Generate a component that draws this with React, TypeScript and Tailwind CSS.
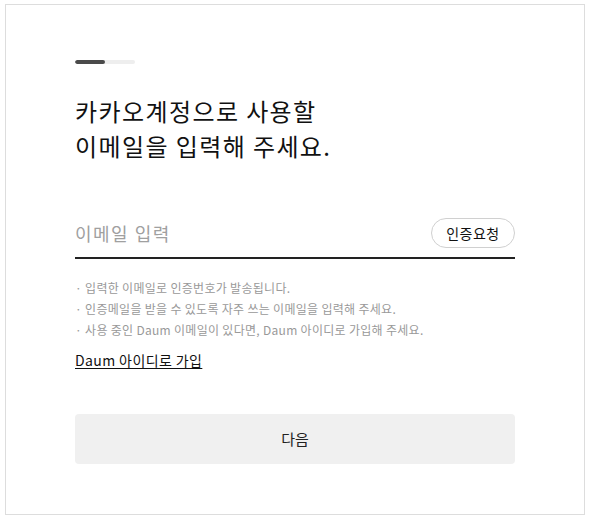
import React from 'react';

const notes = [
  '입력한 이메일로 인증번호가 발송됩니다.',
  '인증메일을 받을 수 있도록 자주 쓰는 이메일을 입력해 주세요.',
  '사용 중인 Daum 이메일이 있다면, Daum 아이디로 가입해 주세요.'
];

export default function App() {
  return (
    <div
      className="h-[522px] w-[590px] bg-white pl-[5px] pt-[4px]"
      style={{ fontFamily: '"Noto Sans CJK KR", "Liberation Sans", sans-serif' }}
    >
      <div className="flex h-[511px] w-[580px] flex-col border border-[#dddddd] px-[69px] pt-[55px]">
        {/* progress */}
        <div className="flex h-[4px] w-[60px] overflow-hidden rounded-full bg-[#eeeeee]">
          <div className="h-full w-[30px] rounded-full bg-[#4a4a4a]" />
        </div>

        <h1 className="mt-[29px] text-[24px] leading-[35px] font-normal tracking-[1.4px] text-[#111111]">
          카카오계정으로 사용할
          <br />
          이메일을 입력해 주세요.
        </h1>

        <div className="mt-[55px] flex items-center border-b-2 border-[#222222] pb-[9px]">
          <input
            placeholder="이메일 입력"
            className="h-[30px] flex-1 bg-transparent text-[18px] tracking-[1.5px] text-[#222222] outline-none placeholder:text-[#a0a0a0]"
          />
          <button className="h-[30px] w-[84px] rounded-full border border-[#d0d0d0] text-[14px] tracking-[0.5px] text-[#111111]">
            인증요청
          </button>
        </div>

        <ul className="mt-[20px] flex flex-col gap-[4px]">
          {notes.map(note => (
            <li key={note} className="flex text-[12px] leading-[17px] tracking-[0.3px] text-[#999999]">
              <span className="mr-[3px]">·</span>
              {note}
            </li>
          ))}
        </ul>

        <a href="#" className="mt-[12px] self-start text-[14px] leading-[20px] tracking-[0.4px] text-[#111111] underline underline-offset-2">
          Daum 아이디로 가입
        </a>

        <button className="mt-[44px] h-[50px] w-full rounded-[4px] bg-[#f0f0f0] text-[15px] text-[#222222]">
          다음
        </button>
      </div>
    </div>
  );
}
